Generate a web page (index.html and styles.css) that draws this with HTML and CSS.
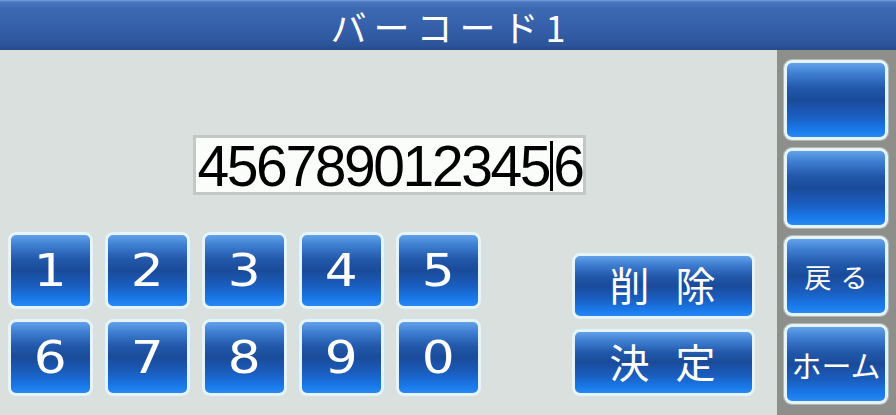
FILE: index.html
```html
<!DOCTYPE html>
<html lang="ja">
<head>
<meta charset="utf-8">
<title>バーコード1</title>
<link rel="stylesheet" href="styles.css">
</head>
<body>
<div class="screen">
  <header class="titlebar"><h1 class="title">バーコード1</h1></header>
  <div class="body">
    <main class="main">
      <div class="field-row">
        <div class="field"><span class="val">45678901234</span><span class="val">5</span><span class="cursor"></span><span class="val">6</span></div>
      </div>
      <div class="bottom">
        <div class="keypad">
          <button class="btn key"><span class="d">1</span></button>
          <button class="btn key"><span class="d">2</span></button>
          <button class="btn key"><span class="d">3</span></button>
          <button class="btn key"><span class="d">4</span></button>
          <button class="btn key"><span class="d">5</span></button>
          <button class="btn key"><span class="d">6</span></button>
          <button class="btn key"><span class="d">7</span></button>
          <button class="btn key"><span class="d">8</span></button>
          <button class="btn key"><span class="d">9</span></button>
          <button class="btn key"><span class="d">0</span></button>
        </div>
        <div class="actions">
          <button class="btn action">削除</button>
          <button class="btn action">決定</button>
        </div>
      </div>
    </main>
    <aside class="side">
      <button class="btn sidebtn"></button>
      <button class="btn sidebtn"></button>
      <button class="btn sidebtn back">戻る</button>
      <button class="btn sidebtn home">ホーム</button>
    </aside>
  </div>
</div>
</body>
</html>
```
FILE: styles.css
```css
* { box-sizing: border-box; }
html, body { margin: 0; padding: 0; }
body {
  width: 896px;
  height: 415px;
  overflow: hidden;
  background: #d9e0de;
  font-family: "Noto Sans CJK JP", "Liberation Sans", sans-serif;
}
.screen { width: 896px; height: 415px; display: flex; flex-direction: column; }
.titlebar {
  height: 50px;
  flex: none;
  background: linear-gradient(to bottom, #7aa2de 0px, #4a76c0 2px, #3d69b3 8px, #345fa8 30px, #2b5398 46px, #24488a 50px);
  display: flex;
  justify-content: center;
}
.title {
  margin: 0;
  color: #fff;
  font-weight: 400;
  font-size: 36px;
  letter-spacing: 7px;
  line-height: 47px;
  height: 50px;
  padding-top: 3px;
  padding-left: 7px;
}
.body { flex: 1; display: flex; }
.main { width: 777px; flex: none; display: flex; flex-direction: column; }
.side {
  flex: 1;
  background: #8e8e8b;
  padding: 10px 0 0 7px;
  display: flex;
  flex-direction: column;
  gap: 8px;
}
.btn {
  margin: 0;
  padding: 0;
  border: 3px solid #e6f4f8;
  border-radius: 8px;
  box-shadow: 0 0 0 1px rgba(200, 230, 245, 0.5);
  background: linear-gradient(to bottom, #62a2ea 0%, #3f7fd2 14%, #2258aa 34%, #1a4b9a 50%, #1a5ec0 72%, #1979ea 90%, #2a88f2 100%);
  color: #fff;
  font-family: "Noto Sans CJK JP", "Liberation Sans", sans-serif;
  font-weight: 400;
  display: flex;
  align-items: center;
  justify-content: center;
}
.field-row { padding-top: 85px; display: flex; justify-content: center; padding-left: 1px; }
.field {
  width: 393px;
  height: 60px;
  background: #fbfdfb;
  border: 3px solid #c3c7c5;
  display: flex;
  align-items: center;
  padding-left: 2px;
  font-family: "Liberation Sans", "DejaVu Sans", sans-serif;
  font-size: 57px;
  letter-spacing: -2.4px;
  color: #000;
  line-height: 1;
}
.val { display: inline-block; padding-top: 3px; }
.cursor { width: 3px; height: 50px; background: #000; margin: 2px 0 0 1px; }
.bottom { display: flex; align-items: flex-end; padding: 37px 0 0 8px; }
.keypad {
  display: grid;
  grid-template-columns: repeat(5, 85px);
  grid-auto-rows: 77px;
  column-gap: 12px;
  row-gap: 10px;
}
.key .d {
  display: inline-block;
  font-family: "DejaVu Sans", sans-serif;
  font-weight: 400;
  font-size: 45px;
  transform: scaleX(1.15);
  line-height: 1;
}
.actions {
  margin-left: 91px;
  display: flex;
  flex-direction: column;
  gap: 10px;
}
.action {
  width: 183px;
  height: 66px;
  font-size: 40px;
  letter-spacing: 26px;
  padding-left: 24px;
  padding-bottom: 4px;
  line-height: 1;
}
.actions .action + .action { height: 67px; }
.sidebtn { width: 104px; height: 80px; }
.back { font-size: 27px; letter-spacing: 9px; padding-left: 9px; }
.home { font-size: 30px; letter-spacing: 0; }
```
